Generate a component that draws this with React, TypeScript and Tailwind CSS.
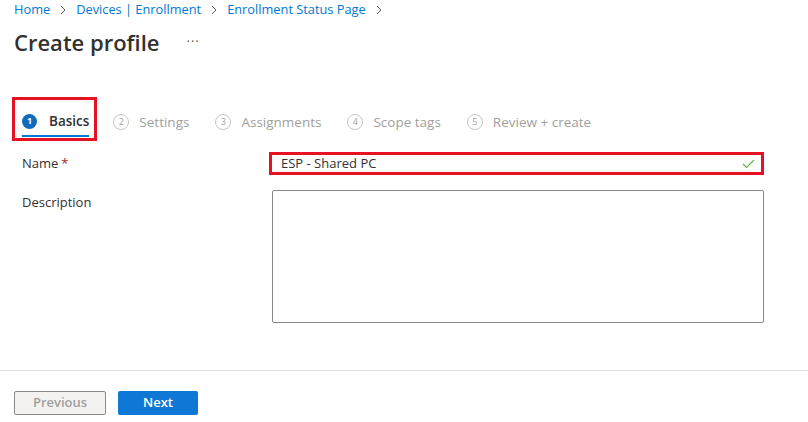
import React from 'react';

const steps = [
  { n: 2, label: 'Settings' },
  { n: 3, label: 'Assignments' },
  { n: 4, label: 'Scope tags' },
  { n: 5, label: 'Review + create' },
];

const Chevron = () => (
  <svg width="8" height="10" viewBox="0 0 8 10" className="mx-[9px]">
    <path d="M2 1l4 4-4 4" fill="none" stroke="#605e5c" strokeWidth="1" />
  </svg>
);

export default function App() {
  return (
    <div className="w-[808px] h-[422px] bg-white flex flex-col font-['Open_Sans',sans-serif] text-[#323130] overflow-hidden">
      {/* Header */}
      <div className="px-[14px]">
        <div className="flex items-center h-[18px] mt-[1px] text-[12.8px] text-[#0078d4]">
          <span>Home</span>
          <Chevron />
          <span>Devices | Enrollment</span>
          <Chevron />
          <span>Enrollment Status Page</span>
          <Chevron />
        </div>
        <div className="flex items-center mt-[8px] h-[30px]">
          <h1 className="text-[22px] font-semibold leading-none">Create profile</h1>
          <span className="ml-[27px] text-[13px] text-[#605e5c] tracking-[1px]">···</span>
        </div>
      </div>

      {/* Tabs */}
      <div className="flex items-stretch mt-[40px] pl-[12px] h-[44px]">
        <div className="border-[3px] border-[#e81123] flex flex-col justify-end pl-[7px] pr-[5px]">
          <div className="flex items-center h-[24px]">
            <span className="w-[15px] h-[15px] rounded-full bg-[#0f6cbd] text-white text-[9px] font-bold flex items-center justify-center">1</span>
            <span className="ml-[12px] text-[13.5px] font-semibold text-[#323130]">Basics</span>
          </div>
          <div className="h-[2px] bg-[#0078d4] mt-[2px] mb-[1px]" />
        </div>
        {steps.map((s) => (
          <div key={s.n} className="flex items-center pt-[6px] ml-[16px] mr-[10px] text-[#a19f9d]">
            <span className="w-[16px] h-[16px] rounded-full border border-[#c8c6c4] text-[9px] flex items-center justify-center">{s.n}</span>
            <span className="ml-[10px] text-[13.5px]">{s.label}</span>
          </div>
        ))}
      </div>

      {/* Form */}
      <div className="grid grid-cols-[247px_495px] pl-[22px] mt-[11px] text-[13px]">
        <div className="flex items-center h-[23px]">
          Name <span className="ml-[3px] text-[#a4262c]">*</span>
        </div>
        <div className="border-[3px] border-[#e81123] h-[23px] flex items-center pl-[9px] pr-[6px]">
          <span className="flex-1 text-[#323130]">ESP - Shared PC</span>
          <svg width="13" height="10" viewBox="0 0 13 10">
            <path d="M1 5l3.5 3.5L12 1" fill="none" stroke="#6bb14d" strokeWidth="1.2" />
          </svg>
        </div>
        <div className="pt-[3px] mt-[15px]">Description</div>
        <div className="mt-[15px] ml-[3px] h-[133px] border border-[#8a8886] rounded-[2px]" />
      </div>

      <div className="flex-1" />

      {/* Footer */}
      <div className="border-t border-[#e1dfdd] h-[52px] flex items-start pt-[20px] pl-[14px] gap-[12px] text-[13px]">
        <button className="w-[92px] h-[24px] bg-[#f3f2f1] border border-[#8a8886] rounded-[2px] text-[#a19f9d] font-semibold">Previous</button>
        <button className="w-[80px] h-[24px] bg-[#0f78d4] rounded-[2px] text-white font-semibold">Next</button>
      </div>
    </div>
  );
}
